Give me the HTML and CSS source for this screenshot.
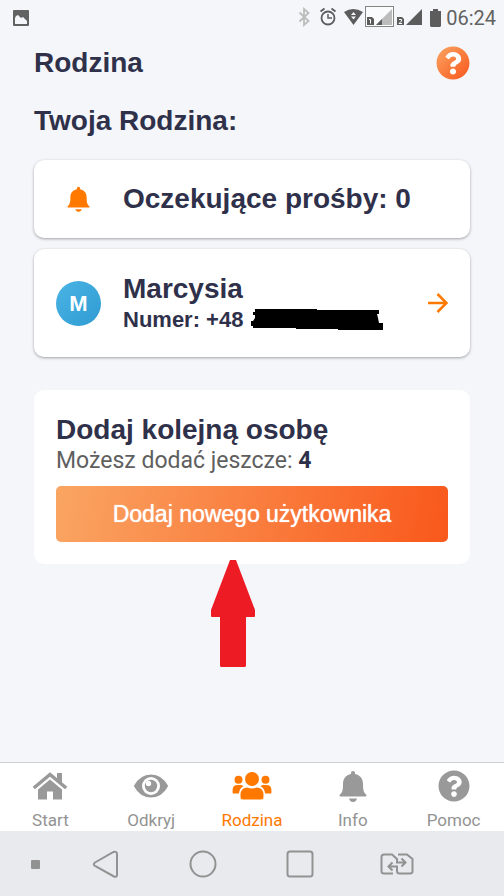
FILE: index.html
```html
<!DOCTYPE html>
<html lang="pl">
<head>
<meta charset="utf-8">
<meta name="viewport" content="width=device-width, initial-scale=1">
<title>Rodzina</title>
<link rel="stylesheet" href="styles.css">
</head>
<body>
<div class="status">
  <svg class="status-photo" width="16" height="16" viewBox="0 0 16 16"><rect width="16" height="16" rx="1" fill="#626262"/><path d="M2 14V8l1-2 2-1 2 2 1 1 2-1 3 3 1 1v3z" fill="#f4f6fa"/></svg>
  <svg width="132" height="24" viewBox="0 0 132 24">
    <path d="M1.500 6.500l9 8.500L6 19V3l4.500 4-9 8.500" fill="none" stroke="#bcbcbc" stroke-width="1.800"/>
    <g fill="none" stroke="#5c5c5c" stroke-width="1.800"><circle cx="30" cy="12" r="6.500"/><path d="M30 8v4h4" stroke-width="1.500"/><path d="M22.500 5.500l4-3M37.500 5.500l-4-3"/></g>
    <path d="M46 6q9-6 19 0l-9.500 13z" fill="#5c5c5c"/><path d="M53 9l2.500-3 2.500 3zM53 10.500h5l-2.500 3z" fill="#f4f6fa"/>
    <rect x="67.500" y=".5" width="28" height="20" fill="#fafbfd" stroke="#858585"/>
    <path d="M94 3v16H78z" fill="#bcbcbc"/><path d="M84 13v6h-6z" fill="#5c5c5c"/>
    <path d="M69 11h5l2 2v6h-7zM99 11h5l2 2v6h-7z" fill="#5c5c5c"/><path d="M71 13.500h1.500v4M101 13.500h2.500v1.500l-2.500 2.500h3" fill="none" stroke="#fff"/>
    <path d="M124 3v16h-16z" fill="#5c5c5c"/>
  </svg>
  <svg class="battery" width="11" height="18" viewBox="0 0 11 18"><path d="M3 0h5v2h3v15l-1 1H1l-1-1V2h3z" fill="#5c5c5c"/></svg>
  <time>06:24</time>
</div>
<main>
  <header>
    <h1>Rodzina</h1>
    <button class="help" type="button" aria-label="Pomoc">
      <svg width="34" height="34" viewBox="0 0 512 512"><defs><linearGradient id="warm" x2="1" y2="1"><stop stop-color="#faa563"/><stop offset="1" stop-color="#f9561b"/></linearGradient></defs><circle cx="256" cy="256" r="220" fill="#fff"/><path id="question" fill="url(#warm)" d="M504 256c0 136.997-111.043 248-248 248S8 392.997 8 256C8 119.083 119.043 8 256 8s248 111.083 248 248zM262.655 90c-54.497 0-89.255 22.957-116.549 63.758-3.536 5.286-2.353 12.415 2.715 16.258l34.699 26.310c5.205 3.947 12.621 3.008 16.665-2.122 17.864-22.658 30.113-35.797 57.303-35.797 20.429 0 45.698 13.148 45.698 32.958 0 14.976-12.363 22.667-32.534 33.976C247.128 238.528 216 254.941 216 296v4c0 6.627 5.373 12 12 12h56c6.627 0 12-5.373 12-12v-1.333c0-28.462 83.186-29.647 83.186-106.667 0-58.002-60.165-102-116.531-102zM256 338c-25.365 0-46 20.635-46 46 0 25.364 20.635 46 46 46s46-20.636 46-46c0-25.365-20.635-46-46-46z"/></svg>
    </button>
  </header>
  <h2>Twoja Rodzina:</h2>
  <section class="card requests">
    <span class="lead"><svg width="23" height="26" viewBox="0 0 28 32"><use href="#bell"/></svg></span>
    <h3>Oczekujące prośby: 0</h3>
  </section>
  <section class="card person">
    <span class="lead"><span class="avatar">M</span></span>
    <div class="who">
      <h3>Marcysia</h3>
      <p>Numer: +48 <svg class="mask" width="132" height="22" viewBox="0 0 132 22"><path d="M4 0h62v1h62v4h-2l1 4 1 5h4v7H87v-1H45v-1H2v-2H0v-5h2l2-3V6H2V3h2z"/></svg></p>
    </div>
    <a class="go" href="#marcysia" aria-label="Marcysia"><svg width="21" height="22" viewBox="0 0 21 22"><path d="M1 11h18M10.500 2l9 9-9 9" fill="none" stroke="#ff7900" stroke-width="2.500"/></svg></a>
  </section>
  <section class="card add">
    <h3>Dodaj kolejną osobę</h3>
    <p>Możesz dodać jeszcze: <b>4</b></p>
    <button class="primary" type="button">Dodaj nowego użytkownika</button>
    <svg class="pointer" width="44" height="107" viewBox="0 0 44 107"><path d="M19 0h6l19 50v6q0 1-1 1h-8v49l-1 1H10l-1-1V57H1q-1 0-1-1v-6z" fill="#ed1c24"/></svg>
  </section>
</main>
<nav class="tabs">
  <a href="#start"><svg width="36" height="32" viewBox="0 0 36 32"><path d="M1.800 18L18 4.500 34.200 18" fill="none" stroke="#999" stroke-width="3.500"/><path d="M25 3h5v10l-5-4zM18 9.500l12 10V29.500h-9v-8h-6v8H6v-10z" fill="#999"/></svg><span>Start</span></a>
  <a href="#odkryj"><svg width="36" height="32" viewBox="0 0 36 32"><path d="M.8 16Q7 4.500 18 4.500T35.200 16Q29 27.500 18 27.500T.8 16z" fill="#999"/><circle cx="18" cy="16" r="9" fill="#fff"/><circle cx="18" cy="16" r="6.200" fill="#999"/><circle cx="15.500" cy="13.500" r="2.700" fill="#fff"/></svg><span>Odkryj</span></a>
  <a class="active" href="#rodzina" aria-current="page"><svg width="40" height="32" viewBox="0 0 40 32"><g fill="#ff7900"><circle cx="6.500" cy="9.700" r="4"/><circle cx="33.500" cy="9.700" r="4"/><circle cx="20" cy="9" r="7"/><path d="M.6 23v-3q0-5 5-5h3q1.500 0 2.800 1.200Q7.500 18.500 7 23q0 .5-.5.500H1.500Q.6 23.500.6 23zM39.400 23v-3q0-5-5-5h-3q-1.500 0-2.800 1.200 3.900 2.300 4.400 6.800 0 .5.500.5h5q.9 0 .9-.5zM8.500 27v-2q0-7.500 7-7.500 4.500 2 9 0 7 0 7 7.500v2q0 2.500-2.500 2.500H11q-2.500 0-2.500-2.500z"/></g></svg><span>Rodzina</span></a>
  <a href="#info"><svg width="28" height="32" viewBox="0 0 28 32"><g id="bell"><path d="M14 1q2 0 2 2v1c5 1 8 4.500 8 10 0 7 1 8.500 3 10.500 1 1 .5 2-.6 2H1.600c-1.100 0-1.600-1-.6-2C3 22.500 4 21 4 14 4 8.500 7 5 12 4V3q0-2 2-2z"/><path d="M10 28.500h8q-1 3.500-4 3.500t-4-3.500z"/></g></svg><span>Info</span></a>
  <a href="#pomoc"><svg width="32" height="32" viewBox="0 0 512 512"><path d="M504 256c0 136.997-111.043 248-248 248S8 392.997 8 256C8 119.083 119.043 8 256 8s248 111.083 248 248zM262.655 90c-54.497 0-89.255 22.957-116.549 63.758-3.536 5.286-2.353 12.415 2.715 16.258l34.699 26.310c5.205 3.947 12.621 3.008 16.665-2.122 17.864-22.658 30.113-35.797 57.303-35.797 20.429 0 45.698 13.148 45.698 32.958 0 14.976-12.363 22.667-32.534 33.976C247.128 238.528 216 254.941 216 296v4c0 6.627 5.373 12 12 12h56c6.627 0 12-5.373 12-12v-1.333c0-28.462 83.186-29.647 83.186-106.667 0-58.002-60.165-102-116.531-102zM256 338c-25.365 0-46 20.635-46 46 0 25.364 20.635 46 46 46s46-20.636 46-46c0-25.365-20.635-46-46-46z"/></svg><span>Pomoc</span></a>
</nav>
<div class="system">
  <svg width="10" height="10" viewBox="0 0 10 10"><rect x="1" y="1" width="9" height="9" rx="1" fill="#929292"/></svg>
  <button type="button" aria-label="Wstecz"><svg width="28" height="28" viewBox="0 0 28 28"><path d="M3 12.500L21.500 2Q25 1 25 4v21q0 2.500-3 1.500L3 16q-2.500-1.500 0-3.500z"/></svg></button>
  <button type="button" aria-label="Ekran główny"><svg width="28" height="28" viewBox="0 0 28 28"><circle cx="14" cy="14" r="12.500"/></svg></button>
  <button type="button" aria-label="Ostatnie"><svg width="28" height="28" viewBox="0 0 28 28"><rect x="1.500" y="1.500" width="25" height="25" rx="2.500"/></svg></button>
  <button type="button" aria-label="Zmień kartę SIM"><svg width="34" height="22" viewBox="0 0 34 22"><path d="M13 20.500H4Q1.500 20.500 1.500 18V4Q1.500 1.500 4 1.500h8L17 6v3.500h8M21.500 5.500l4 4-4 4M18 1.500h9L32.500 6v12q0 2.500-2.500 2.500H19.500q-2.500 0-2.500-2.500v-4.500H9M12.500 9.500l-4 4 4 4"/></svg></button>
</div>
</body>
</html>
```
FILE: styles.css
```css
* { box-sizing: border-box; }
body {
  margin: 0;
  min-height: 100vh;
  display: flex;
  flex-direction: column;
  background: #f4f6fa;
  color: #2f314b;
  font-family: "Liberation Sans", Arial, sans-serif;
}
h1, h2, h3, p { margin: 0; }
h1, h2, h3 { font-size: 28px; line-height: 32px; font-weight: bold; }
button { border: 0; padding: 0; background: none; font: inherit; }
svg { display: block; flex: none; }
a { text-decoration: none; }

.status {
  height: 36px;
  padding: 0 8px 0 13px;
  display: flex;
  align-items: center;
  color: #626262;
  font: 20px/24px Roboto, sans-serif;
}
.status-photo { margin-right: auto; }
.battery { margin-right: 5px; }

main { flex: 1; padding: 10px 34px 0; }
header {
  display: flex;
  justify-content: space-between;
  align-items: center;
}
h2 { margin: 25px 0 23px; }

.card {
  padding: 22px;
  border-radius: 10px;
  background: #fff;
}
.requests, .person {
  display: flex;
  align-items: center;
  margin-bottom: 11px;
  box-shadow: 0 1px 3px rgba(0, 0, 0, 0.35);
}
.requests { min-height: 78px; }
.person { min-height: 107px; margin-bottom: 33px; }
.lead {
  width: 45px;
  margin-right: 22px;
  display: flex;
  justify-content: center;
}
.lead svg { fill: #ff7900; }
.avatar {
  width: 45px;
  height: 45px;
  border-radius: 50%;
  background: linear-gradient(135deg, #4bb4e6, #2f9bd1);
  color: #fff;
  font-weight: bold;
  font-size: 22px;
  line-height: 46px;
  text-align: center;
}
.who { padding-top: 2px; }
.who p {
  display: flex;
  gap: 8px;
  font-size: 22px;
  line-height: 30px;
  font-weight: bold;
}
.mask { margin-top: 4px; }
.go { margin-left: auto; }

.add { position: relative; padding-top: 24px; }
.add p {
  margin-bottom: 10px;
  color: #5f5f5f;
  font: 23px/30px Roboto, sans-serif;
}
.add b { color: #2f314b; }
.primary {
  width: 100%;
  height: 56px;
  border-radius: 5px;
  background: linear-gradient(100deg, #faa563, #f9581b);
  color: #fff;
  font-size: 23px;
  text-shadow: 0 0 1px #fff;
}
.pointer {
  position: absolute;
  top: 170px;
  left: calc(50% - 41px);
}

.tabs {
  height: 69px;
  padding-top: 7px;
  display: grid;
  grid-template-columns: repeat(5, 1fr);
  border-top: 1px solid #d0d1d4;
  background: #fff;
}
.tabs a {
  display: flex;
  flex-direction: column;
  align-items: center;
  gap: 8px;
  color: #939393;
  fill: #999;
  font: 17px/20px Roboto, sans-serif;
}
.tabs .active { color: #ff7900; }

.system {
  height: 65px;
  padding: 0 59px 0 30px;
  display: flex;
  align-items: center;
  background: #e9eaee;
}
.system > svg { margin-right: 17px; }
.system button {
  flex: 1;
  display: flex;
  justify-content: center;
}
.system button svg { fill: none; stroke: #929292; stroke-width: 2; }
```
